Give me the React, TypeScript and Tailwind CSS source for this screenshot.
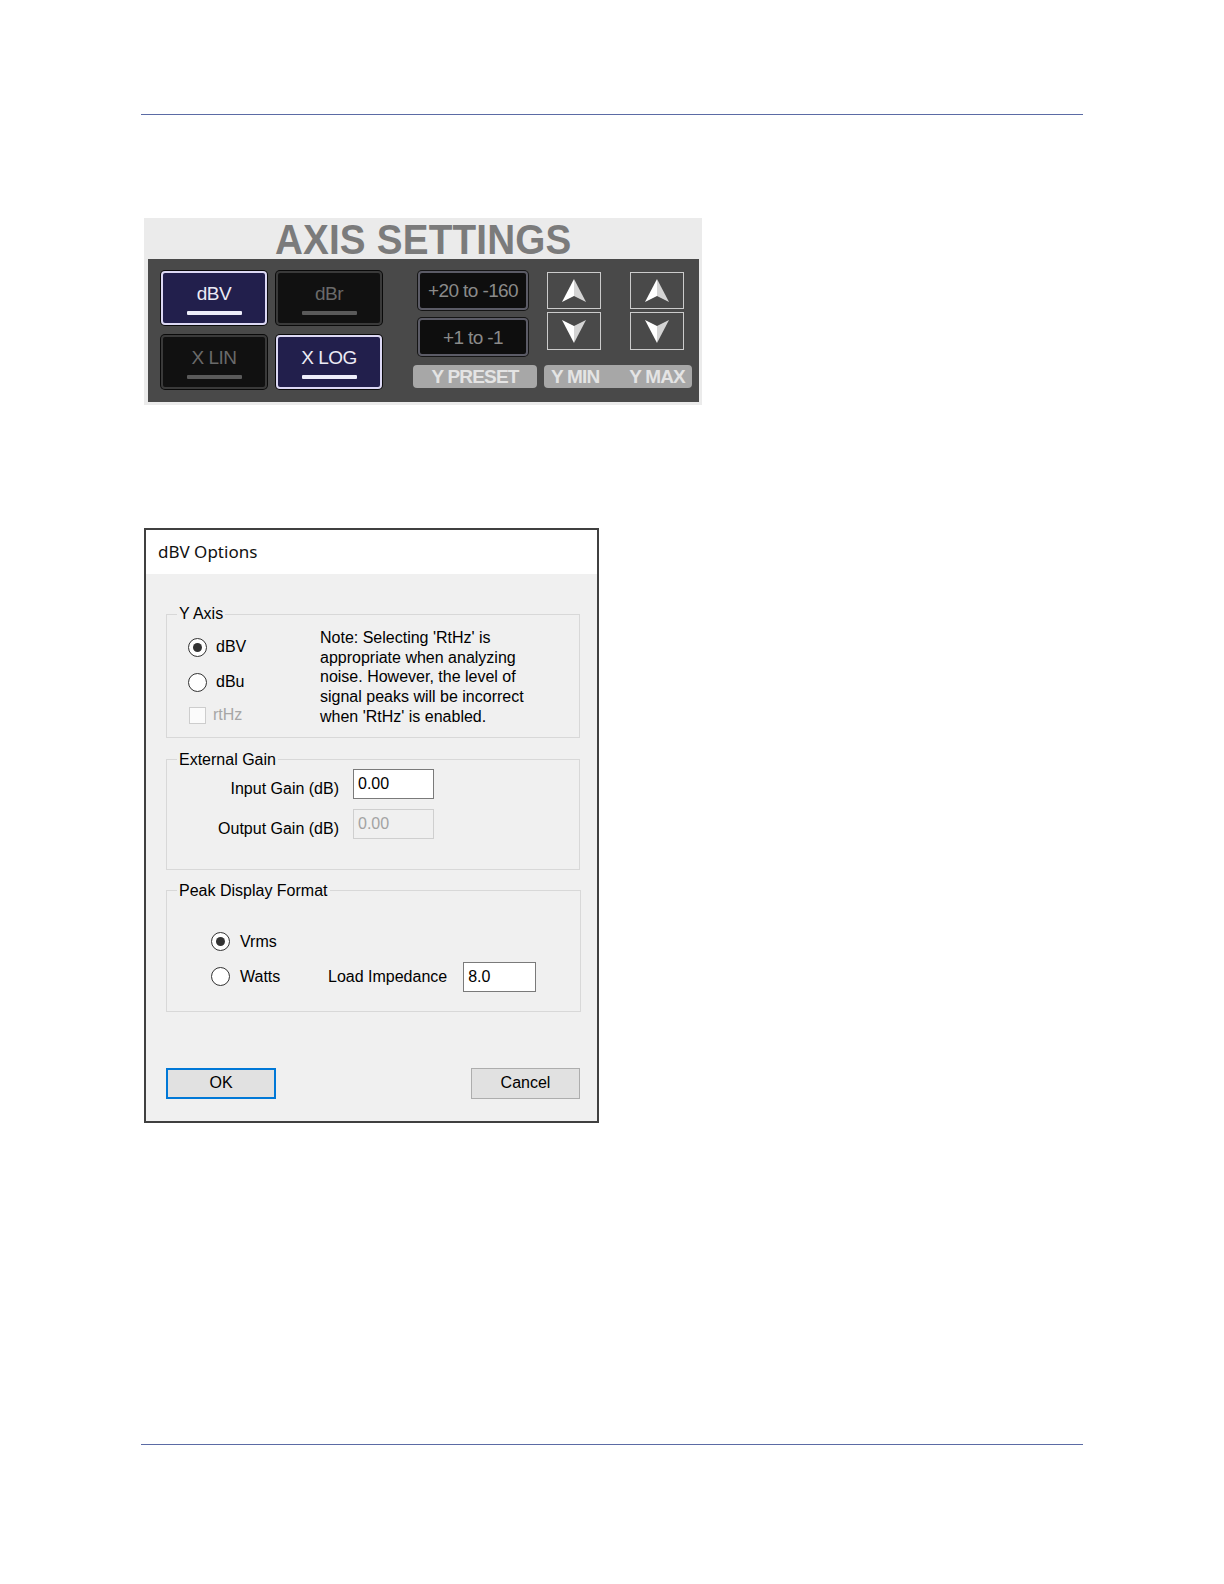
import React from "react";

const sans = "font-['Liberation_Sans',Arial,sans-serif]";

function ToggleBtn({ label, active }: { label: string; active?: boolean }) {
  return (
    <div
      className={`flex h-[54px] w-[106px] flex-col items-center rounded-[4px] border-2 pt-[11px] shadow-[0_0_0_1px_#0a0a0a] ${
        active
          ? "border-[#dcd8f4] bg-[#221f4c] text-[#ecebf5]"
          : "border-[#3a3a3a] bg-[#111111] text-[#6a6a6a]"
      }`}
    >
      <span className="text-[19px] leading-[20px] tracking-[-0.5px]">{label}</span>
      <span
        className={`mt-[7px] h-[4px] w-[55px] rounded-[1px] ${
          active ? "bg-[#eeeefa]" : "bg-[#5a5a5a]"
        }`}
      />
    </div>
  );
}

function PresetBtn({ label, tall }: { label: string; tall?: boolean }) {
  return (
    <div
      className={`ml-[5px] flex w-[110px] items-center justify-center rounded-[4px] border-2 border-[#5b5b66] bg-[#0e0e0e] text-[19px] leading-none tracking-[-0.6px] text-[#8a8a8a] shadow-[0_0_0_1px_#151515] ${
        tall ? "h-[39px]" : "h-[38px]"
      }`}
    >
      {label}
    </div>
  );
}

function ArrowBox({ down }: { down?: boolean }) {
  return (
    <div
      className={`flex w-[54px] items-center justify-center border border-[#cbcbcb] ${
        down ? "h-[38px]" : "h-[37px]"
      }`}
    >
      {down ? (
        <svg width="24" height="23" viewBox="0 0 24 23">
          <path d="M12 23 L0 0 L12 6 Z" fill="#ffffff" />
          <path d="M12 23 L24 0 L12 6 Z" fill="#d4d4d4" />
        </svg>
      ) : (
        <svg width="24" height="23" viewBox="0 0 24 23">
          <path d="M12 0 L0 23 L12 17 Z" fill="#ffffff" />
          <path d="M12 0 L24 23 L12 17 Z" fill="#d4d4d4" />
        </svg>
      )}
    </div>
  );
}

function AxisSettings() {
  return (
    <div className={`ml-[144px] mt-[103px] h-[187px] w-[558px] bg-[#ebebeb] ${sans}`}>
      <div className="flex h-[41px] items-start justify-center pt-[2px]">
        <span className="inline-block scale-x-[0.92] text-[42px] font-bold leading-[40px] tracking-[0.2px] text-[#7b7b7b]">
          AXIS SETTINGS
        </span>
      </div>
      <div className="ml-[4px] flex h-[143px] w-[551px] items-start bg-[#494949] pl-[13px] pt-[12px]">
        <div className="grid grid-cols-[106px_106px] gap-x-[9px] gap-y-[10px]">
          <ToggleBtn label="dBV" active />
          <ToggleBtn label="dBr" />
          <ToggleBtn label="X LIN" />
          <ToggleBtn label="X LOG" active />
        </div>

        <div className="ml-[31px] flex w-[124px] flex-col">
          <PresetBtn label="+20 to -160" tall />
          <div className="mt-[8px]">
            <PresetBtn label="+1 to -1" />
          </div>
          <div className="mt-[9px] flex h-[23px] items-center justify-center rounded-[4px] bg-[#a7a7a7] text-[19px] font-bold leading-none tracking-[-0.8px] text-[#e4e4e4]">
            Y PRESET
          </div>
        </div>

        <div className="ml-[7px] mt-[1px] flex w-[148px] flex-col">
          <div className="ml-[3px] flex gap-x-[29px]">
            <div className="flex flex-col gap-y-[3px]">
              <ArrowBox />
              <ArrowBox down />
            </div>
            <div className="flex flex-col gap-y-[3px]">
              <ArrowBox />
              <ArrowBox down />
            </div>
          </div>
          <div className="mt-[15px] flex h-[23px] items-center justify-between rounded-[4px] bg-[#a7a7a7] px-[7px] text-[19px] font-bold leading-none tracking-[-0.8px] text-[#e4e4e4]">
            <span>Y MIN</span>
            <span>Y MAX</span>
          </div>
        </div>
      </div>
    </div>
  );
}

function Radio({ checked }: { checked?: boolean }) {
  return (
    <div className="flex h-[19px] w-[19px] shrink-0 items-center justify-center rounded-full border border-[#333333] bg-white">
      {checked && <div className="h-[9px] w-[9px] rounded-full bg-[#333333]" />}
    </div>
  );
}

function GroupBox({
  title,
  className,
  children,
}: {
  title: string;
  className: string;
  children: React.ReactNode;
}) {
  return (
    <fieldset className={`ml-[20px] border border-[#d8d8d8] px-[10px] ${className}`}>
      <legend className="px-[2px] leading-[18px]">{title}</legend>
      {children}
    </fieldset>
  );
}

function TextBox({ value, width, disabled }: { value: string; width: string; disabled?: boolean }) {
  return (
    <div
      className={`h-[30px] border pl-[4px] leading-[28px] ${width} ${
        disabled ? "border-[#cfcfcf] bg-[#f0f0f0] text-[#a3a3a3]" : "border-[#7a7a7a] bg-white text-black"
      }`}
    >
      {value}
    </div>
  );
}

function OptionsDialog() {
  return (
    <div className={`ml-[144px] mt-[123px] w-[455px] border-2 border-[#404040] text-[16px] text-black ${sans}`}>
      <div className="flex h-[44px] items-center bg-white pl-[12px] font-['Segoe_UI','Noto_Sans',sans-serif] text-[17px] text-[#111]">
        dBV Options
      </div>
      <div className="bg-[#f0f0f0] pb-[22px] pt-[31px]">
        <GroupBox title="Y Axis" className="w-[414px] pb-[10px] pt-[5px]">
          <div className="flex">
            <div className="w-[143px] pt-[9px]">
              <div className="flex h-[20px] items-center pl-[11px]">
                <Radio checked />
                <span className="ml-[9px]">dBV</span>
              </div>
              <div className="mt-[15px] flex h-[20px] items-center pl-[11px]">
                <Radio />
                <span className="ml-[9px]">dBu</span>
              </div>
              <div className="mt-[13px] flex h-[20px] items-center pl-[12px]">
                <div className="h-[17px] w-[17px] border border-[#cdcdcd] bg-[#fbfbfb]" />
                <span className="ml-[7px] text-[#a6a6a6]">rtHz</span>
              </div>
            </div>
            <div className="leading-[19.7px]">
              <div>Note: Selecting 'RtHz' is</div>
              <div>appropriate when analyzing</div>
              <div>noise. However, the level of</div>
              <div>signal peaks will be incorrect</div>
              <div>when 'RtHz' is enabled.</div>
            </div>
          </div>
        </GroupBox>

        <GroupBox title="External Gain" className="mt-[13px] w-[414px] pb-[30px]">
          <div className="flex h-[30px]">
            <span className="w-[162px] pt-[11px] text-right leading-[18px]">Input Gain (dB)</span>
            <div className="ml-[14px]">
              <TextBox value="0.00" width="w-[81px]" />
            </div>
          </div>
          <div className="mt-[10px] flex h-[30px]">
            <span className="w-[162px] pt-[11px] text-right leading-[18px]">Output Gain (dB)</span>
            <div className="ml-[14px]">
              <TextBox value="0.00" width="w-[81px]" disabled />
            </div>
          </div>
        </GroupBox>

        <GroupBox title="Peak Display Format" className="mt-[12px] w-[415px] pb-[19px] pt-[32px]">
          <div className="flex h-[20px] items-center pl-[34px]">
            <Radio checked />
            <span className="ml-[10px]">Vrms</span>
          </div>
          <div className="mt-[10px] flex h-[30px] items-center pl-[34px]">
            <Radio />
            <span className="ml-[10px] w-[88px]">Watts</span>
            <span>Load Impedance</span>
            <div className="ml-[16px]">
              <TextBox value="8.0" width="w-[73px]" />
            </div>
          </div>
        </GroupBox>

        <div className="mt-[56px] flex justify-between pl-[20px] pr-[17px]">
          <div className="flex h-[31px] w-[110px] items-center justify-center border-2 border-[#0078d7] bg-[#e1e1e1]">
            OK
          </div>
          <div className="flex h-[31px] w-[109px] items-center justify-center border border-[#adadad] bg-[#e1e1e1]">
            Cancel
          </div>
        </div>
      </div>
    </div>
  );
}

export default function App() {
  return (
    <div className="min-h-[1584px] w-[1224px] bg-white pt-[114px]">
      <div className="ml-[141px] h-px w-[942px] bg-[#5b6ba5]" />
      <AxisSettings />
      <OptionsDialog />
      <div className="ml-[141px] mt-[321px] h-px w-[942px] bg-[#5b6ba5]" />
    </div>
  );
}
